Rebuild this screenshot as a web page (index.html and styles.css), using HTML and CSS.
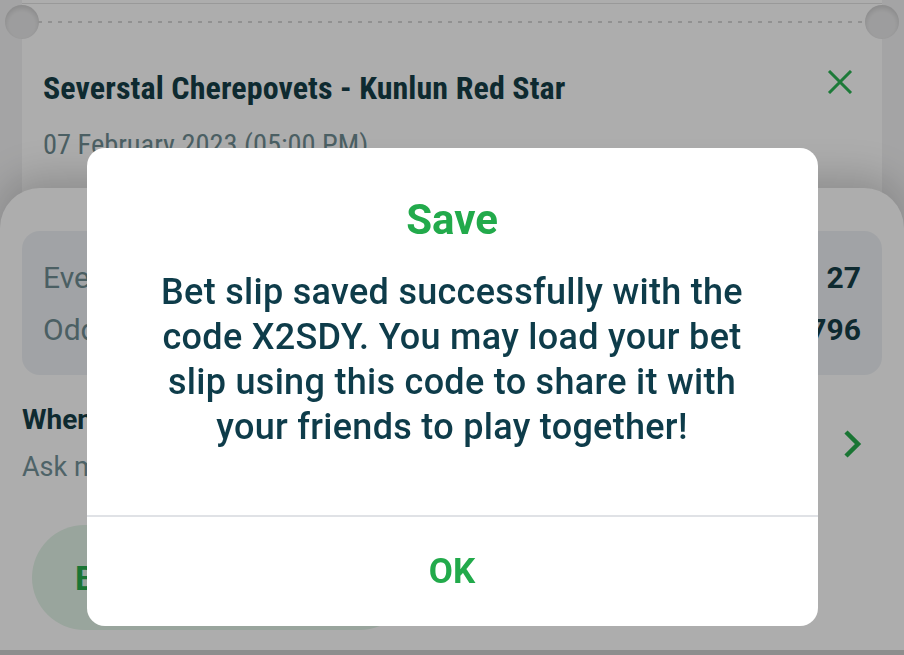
FILE: index.html
```html
<!DOCTYPE html>
<html lang="en">
<head>
<meta charset="utf-8">
<title>Bet slip saved</title>
<link rel="stylesheet" href="styles.css">
</head>
<body>
<div class="page">
  <div class="prev-card"></div>
  <div class="ticket">
    <div class="ticket-sep"></div>
    <div class="ticket-head">
      <div class="match">Severstal Cherepovets - Kunlun Red Star</div>
      <svg class="close" viewBox="0 0 26 24" width="26" height="24"><path d="M2 1 L24 23 M24 1 L2 23" stroke="currentColor" stroke-width="3" fill="none"/></svg>
    </div>
    <div class="date">07 February 2023 (05:00 PM)</div>
  </div>

  <div class="sheet">
    <div class="summary">
      <div class="sum-row"><span class="sum-label">Events</span><span class="sum-value">27</span></div>
      <div class="sum-row"><span class="sum-label">Odds</span><span class="sum-value">1796</span></div>
    </div>
    <div class="option">
      <div class="option-text">
        <div class="option-title">When</div>
        <div class="option-sub">Ask me</div>
      </div>
      <svg class="chevron" viewBox="0 0 20 30" width="20" height="30"><path d="M4 3 L16 15 L4 27" stroke="currentColor" stroke-width="4.5" fill="none"/></svg>
    </div>
    <div class="actions">
      <div class="btn-bet">Bet</div>
    </div>
    <div class="navbar"></div>
  </div>
</div>

<div class="overlay">
  <div class="dialog">
    <div class="dialog-main">
      <div class="dialog-title">Save</div>
      <p class="dialog-text">Bet slip saved successfully with the code X2SDY. You may load your bet slip using this code to share it with your friends to play together!</p>
    </div>
    <div class="dialog-footer">
      <div class="dialog-ok">OK</div>
    </div>
  </div>
</div>
</body>
</html>
```

FILE: styles.css
```css
* { box-sizing: border-box; }
html, body { margin: 0; padding: 0; }
body {
  width: 904px;
  height: 655px;
  overflow: hidden;
  background: #f2f2f3;
  font-family: Roboto, "Noto Sans", sans-serif;
  color: #163f48;
}
.page {
  position: relative;
  height: 655px;
}
.prev-card {
  height: 4px;
  margin: 0 22px;
  background: #ffffff;
  border-bottom: 1px solid #e2e2e2;
}
.ticket {
  position: relative;
  margin: 0 22px;
  height: 260px;
  background: #ffffff;
}
.ticket-sep {
  position: relative;
  height: 36px;
}
.ticket-sep::after {
  content: "";
  position: absolute;
  left: 16px;
  right: 16px;
  top: 17px;
  height: 2px;
  background: repeating-linear-gradient(90deg, #d6d6d6 0 4px, transparent 4px 10px);
}
.ticket-sep::before {
  content: "";
  position: absolute;
  left: -39px;
  top: 1px;
  width: 34px;
  height: 34px;
  border-radius: 50%;
  background: #e8e8e9;
  box-shadow: inset 0 3px 5px rgba(0,0,0,0.12);
  transform: translateX(22px);
}
.ticket::before {
  content: "";
  position: absolute;
  right: -39px;
  top: 1px;
  width: 34px;
  height: 34px;
  border-radius: 50%;
  background: #e8e8e9;
  box-shadow: inset 0 3px 5px rgba(0,0,0,0.12);
  transform: translateX(-22px);
}
.ticket-head {
  display: flex;
  align-items: center;
  justify-content: space-between;
  padding: 30px 29px 0 21px;
}
.match {
  font-size: 32px;
  font-weight: 700;
  font-stretch: 85%;
  letter-spacing: 0.1px;
  line-height: 36px;
}
.close {
  color: #2cb454;
  display: block;
  margin-bottom: 12px;
}
.date {
  padding: 22px 21px 0;
  font-size: 28.4px;
  font-stretch: 82%;
  line-height: 34px;
  color: #6f8d93;
}
.sheet {
  position: absolute;
  left: 0;
  right: 0;
  top: 188px;
  bottom: 0;
  background: #ffffff;
  border-radius: 40px 40px 0 0;
  box-shadow: 0 -10px 40px rgba(0,0,0,0.2);
  display: flex;
  flex-direction: column;
  padding: 43px 22px 0;
}
.summary {
  background: #eef1f5;
  border-radius: 18px;
  padding: 20px 21px;
}
.sum-row {
  display: flex;
  justify-content: space-between;
  align-items: center;
  height: 52px;
  font-size: 30px;
}
.sum-label { color: #6f8d93; }
.sum-value { font-weight: 700; color: #163f48; }
.option {
  display: flex;
  align-items: center;
  justify-content: space-between;
  margin-top: 28px;
  padding-right: 20px;
}
.option-title {
  font-size: 28px;
  font-weight: 700;
  line-height: 34px;
  color: #163f48;
}
.option-sub {
  margin-top: 13px;
  font-size: 27px;
  line-height: 34px;
  color: #74939a;
}
.chevron { color: #27ad4d; display: block; }
.actions {
  display: flex;
  margin-top: 41px;
  padding-left: 10px;
}
.btn-bet {
  width: 380px;
  height: 105px;
  border-radius: 53px;
  background: #e2f3e7;
  color: #27ad4d;
  font-size: 34px;
  font-weight: 700;
  display: flex;
  align-items: center;
  padding-left: 43px;
}
.navbar {
  margin: 20px -22px 0;
  height: 10px;
  background: #d2d2d2;
}
.overlay {
  position: fixed;
  inset: 0;
  background: rgba(0,0,0,0.32);
  display: flex;
  justify-content: center;
  align-items: flex-start;
  padding-top: 148px;
}
.dialog {
  width: 731px;
  height: 478px;
  background: #ffffff;
  border-radius: 18px;
  display: flex;
  flex-direction: column;
  overflow: hidden;
}
.dialog-main {
  flex: 1;
  padding: 50px 60px 0;
  text-align: center;
}
.dialog-title {
  font-size: 42px;
  line-height: 44px;
  font-weight: 700;
  font-stretch: 92%;
  color: #22aa4b;
}
.dialog-text {
  margin: 28px 0 0;
  font-size: 36px;
  font-weight: 500;
  font-stretch: 90%;
  letter-spacing: 0.3px;
  line-height: 45px;
  color: #0e3c4a;
}
.dialog-footer {
  height: 111px;
  border-top: 2px solid #e0e2e6;
  display: flex;
  align-items: center;
  justify-content: center;
}
.dialog-ok {
  font-size: 35px;
  font-weight: 700;
  font-stretch: 92%;
  color: #22aa4b;
}
```
